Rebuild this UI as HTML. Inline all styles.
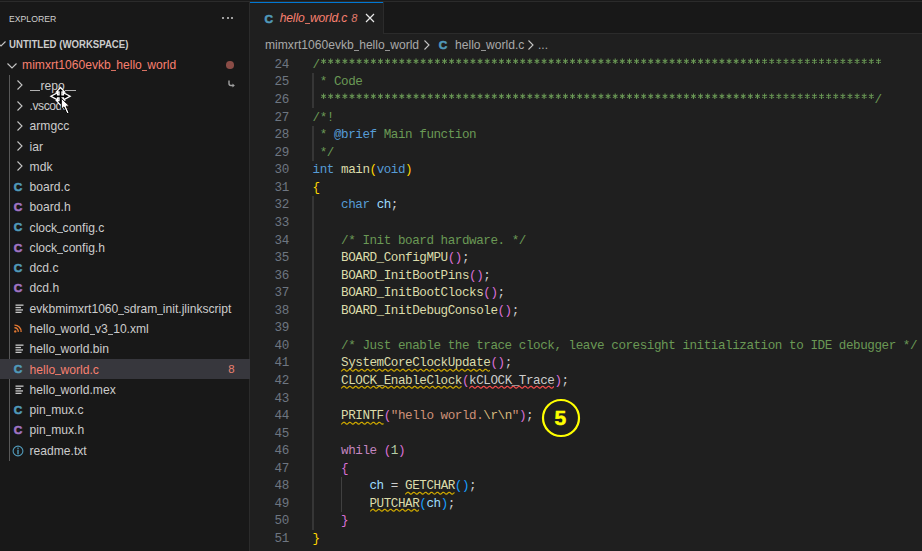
<!DOCTYPE html>
<html><head><meta charset="utf-8">
<style>
*{margin:0;padding:0;box-sizing:border-box}
html,body{width:922px;height:551px;overflow:hidden;background:#1f1f1f}
body{position:relative;font-family:"Liberation Sans",sans-serif;color:#cccccc}
.abs,.ic{position:absolute}
#side{position:absolute;left:0;top:0;width:249px;height:551px;background:#181818}
#sideborder{position:absolute;left:249px;top:2px;width:1px;height:549px;background:#2b2b2b}
#top0{position:absolute;left:0;top:0;width:922px;height:1px;background:#1a1a1a}
#topline{position:absolute;left:0;top:1px;width:922px;height:1px;background:#2b2b2b}
.title{position:absolute;left:9px;top:11.7px;font-size:9.7px;color:#d0d0d0;line-height:14px;transform:scaleX(0.895);transform-origin:0 0}
.hdr{position:absolute;left:9px;top:37.6px;font-size:10.4px;font-weight:bold;line-height:14px;color:#cccccc;transform:scaleX(0.925);transform-origin:0 0}
.row{position:absolute;left:0;width:250px;font-size:12.1px;white-space:pre}
.row .t{position:absolute;left:30px;top:0}
.sel{background:#37373d}
.u{display:inline-block;width:5.45px;height:1px;background:currentColor;vertical-align:-1.8px;opacity:0.85}
.err{color:#f88070}
#guide{position:absolute;left:9px;top:75px;width:1px;height:386px;background:#585858}
#tabbar{position:absolute;left:250px;top:2px;width:672px;height:31px;background:#181818}
#tabbot{position:absolute;left:250px;top:33px;width:672px;height:1px;background:#2b2b2b}
#tab{position:absolute;left:250px;top:2px;width:134px;height:32px;background:#1f1f1f;border-right:1px solid #2b2b2b}
#tabtop{position:absolute;left:250px;top:2px;width:133px;height:1px;background:#0078d4}
.mono{font-family:"Liberation Mono",monospace;white-space:pre}
.c{color:#6a9955}.k{color:#569cd6}.f{color:#dcdcaa}.v{color:#9cdcfe}.s{color:#ce9178}.e{color:#d7ba7d}.n{color:#b5cea8}.p{color:#c586c0}.d{color:#cccccc}
.b1{color:#ffd700}.b2{color:#da70d6}.b3{color:#179fff}
.ig{position:absolute;width:1px;background:#404040}
</style></head><body>
<div id="side"></div>
<div id="sideborder"></div>
<div id="topline"></div><div id="top0"></div>
<div class="title">EXPLORER</div>

<div class="abs" style="left:222.1px;top:16.8px;width:2px;height:2px;background:#cccccc;border-radius:1px"></div>
<div class="abs" style="left:226.7px;top:16.8px;width:2px;height:2px;background:#cccccc;border-radius:1px"></div>
<div class="abs" style="left:231.3px;top:16.8px;width:2px;height:2px;background:#cccccc;border-radius:1px"></div>
<div class="hdr">UNTITLED (WORKSPACE)</div>
<svg class="ic" style="left:-5.5px;top:40.3px" width="12" height="8" viewBox="0 0 12 8"><path d="M1.5 1.5 L6 6 L10.5 1.5" fill="none" stroke="#c5c5c5" stroke-width="1.1"/></svg>
<div id="guide"></div>
<div class="row " style="top:54.80px;height:20.28px;line-height:20.28px"><span class="t err" style="left:22.1px;top:0.6px;">mimxrt1060evkb<span class="u"></span>hello<span class="u"></span>world</span></div>
<svg class="ic" style="left:6px;top:61.739999999999995px" width="12" height="8" viewBox="0 0 12 8"><path d="M1.5 1.5 L6 6 L10.5 1.5" fill="none" stroke="#c5c5c5" stroke-width="1.1"/></svg>
<div class="row " style="top:75.08px;height:20.28px;line-height:20.28px"><span class="t " style="left:29.6px;top:0.6px;"><span class="u"></span><span class="u"></span>repo<span class="u"></span><span class="u"></span></span></div>
<svg class="ic" style="left:16px;top:79.22px" width="8" height="12" viewBox="0 0 8 12"><path d="M1.5 1.5 L6 6 L1.5 10.5" fill="none" stroke="#c5c5c5" stroke-width="1.1"/></svg>
<div class="row " style="top:95.36px;height:20.28px;line-height:20.28px"><span class="t " style="left:29.6px;top:0.6px;letter-spacing:-0.45px">.vscode</span></div>
<svg class="ic" style="left:16px;top:99.5px" width="8" height="12" viewBox="0 0 8 12"><path d="M1.5 1.5 L6 6 L1.5 10.5" fill="none" stroke="#c5c5c5" stroke-width="1.1"/></svg>
<div class="row " style="top:115.64px;height:20.28px;line-height:20.28px"><span class="t " style="left:29.6px;top:0.6px;">armgcc</span></div>
<svg class="ic" style="left:16px;top:119.78px" width="8" height="12" viewBox="0 0 8 12"><path d="M1.5 1.5 L6 6 L1.5 10.5" fill="none" stroke="#c5c5c5" stroke-width="1.1"/></svg>
<div class="row " style="top:135.92px;height:20.28px;line-height:20.28px"><span class="t " style="left:29.6px;top:0.6px;">iar</span></div>
<svg class="ic" style="left:16px;top:140.06px" width="8" height="12" viewBox="0 0 8 12"><path d="M1.5 1.5 L6 6 L1.5 10.5" fill="none" stroke="#c5c5c5" stroke-width="1.1"/></svg>
<div class="row " style="top:156.20px;height:20.28px;line-height:20.28px"><span class="t " style="left:29.6px;top:0.6px;">mdk</span></div>
<svg class="ic" style="left:16px;top:160.33999999999997px" width="8" height="12" viewBox="0 0 8 12"><path d="M1.5 1.5 L6 6 L1.5 10.5" fill="none" stroke="#c5c5c5" stroke-width="1.1"/></svg>
<div class="row " style="top:176.48px;height:20.28px;line-height:20.28px"><span class="t " style="left:29.6px;top:0.6px;">board.c</span></div>
<div class="ic" style="left:13.80px;top:179.82px;font:bold 11.8px/14px 'Liberation Sans',sans-serif;color:#519aba;-webkit-text-stroke:0.55px #519aba">C</div>
<div class="row " style="top:196.76px;height:20.28px;line-height:20.28px"><span class="t " style="left:29.6px;top:0.6px;">board.h</span></div>
<div class="ic" style="left:13.80px;top:200.10px;font:bold 11.8px/14px 'Liberation Sans',sans-serif;color:#a074c4;-webkit-text-stroke:0.55px #a074c4">C</div>
<div class="row " style="top:217.04px;height:20.28px;line-height:20.28px"><span class="t " style="left:29.6px;top:0.6px;">clock<span class="u"></span>config.c</span></div>
<div class="ic" style="left:13.80px;top:220.38px;font:bold 11.8px/14px 'Liberation Sans',sans-serif;color:#519aba;-webkit-text-stroke:0.55px #519aba">C</div>
<div class="row " style="top:237.32px;height:20.28px;line-height:20.28px"><span class="t " style="left:29.6px;top:0.6px;">clock<span class="u"></span>config.h</span></div>
<div class="ic" style="left:13.80px;top:240.66px;font:bold 11.8px/14px 'Liberation Sans',sans-serif;color:#a074c4;-webkit-text-stroke:0.55px #a074c4">C</div>
<div class="row " style="top:257.60px;height:20.28px;line-height:20.28px"><span class="t " style="left:29.6px;top:0.6px;">dcd.c</span></div>
<div class="ic" style="left:13.80px;top:260.94px;font:bold 11.8px/14px 'Liberation Sans',sans-serif;color:#519aba;-webkit-text-stroke:0.55px #519aba">C</div>
<div class="row " style="top:277.88px;height:20.28px;line-height:20.28px"><span class="t " style="left:29.6px;top:0.6px;">dcd.h</span></div>
<div class="ic" style="left:13.80px;top:281.22px;font:bold 11.8px/14px 'Liberation Sans',sans-serif;color:#a074c4;-webkit-text-stroke:0.55px #a074c4">C</div>
<div class="row " style="top:298.16px;height:20.28px;line-height:20.28px"><span class="t " style="left:29.6px;top:0.6px;">evkbmimxrt1060<span class="u"></span>sdram<span class="u"></span>init.jlinkscript</span></div>
<svg class="ic" style="left:15.1px;top:303.6px" width="10" height="10" viewBox="0 0 10 10"><rect x="0.5" y="0.5" width="8" height="1.3" fill="#c8c8c8"/><rect x="0.5" y="2.9" width="5.5" height="1.3" fill="#c8c8c8"/><rect x="0.5" y="5.3" width="7.5" height="1.3" fill="#c8c8c8"/><rect x="0.5" y="7.7" width="6" height="1.3" fill="#c8c8c8"/></svg>
<div class="row " style="top:318.44px;height:20.28px;line-height:20.28px"><span class="t " style="left:29.6px;top:0.6px;">hello<span class="u"></span>world<span class="u"></span>v3<span class="u"></span>10.xml</span></div>
<svg class="ic" style="left:14px;top:323.97999999999996px" width="9" height="9" viewBox="0 0 10 10"><circle cx="1.4" cy="8.2" r="1.3" fill="#e37933"/><path d="M0.5 4.2 A4 4 0 0 1 4.7 8.8" fill="none" stroke="#e37933" stroke-width="1.5"/><path d="M0.5 1.2 A7.2 7.2 0 0 1 7.9 8.8" fill="none" stroke="#e37933" stroke-width="1.5"/></svg>
<div class="row " style="top:338.72px;height:20.28px;line-height:20.28px"><span class="t " style="left:29.6px;top:0.6px;">hello<span class="u"></span>world.bin</span></div>
<svg class="ic" style="left:15.1px;top:344.16px" width="10" height="10" viewBox="0 0 10 10"><rect x="0.5" y="0.5" width="8" height="1.3" fill="#c8c8c8"/><rect x="0.5" y="2.9" width="5.5" height="1.3" fill="#c8c8c8"/><rect x="0.5" y="5.3" width="7.5" height="1.3" fill="#c8c8c8"/><rect x="0.5" y="7.7" width="6" height="1.3" fill="#c8c8c8"/></svg>
<div class="row sel" style="top:359.00px;height:20.28px;line-height:20.28px"><span class="t err" style="left:29.6px;top:0.6px;">hello<span class="u"></span>world.c</span></div>
<div class="ic" style="left:13.80px;top:362.34px;font:bold 11.8px/14px 'Liberation Sans',sans-serif;color:#519aba;-webkit-text-stroke:0.55px #519aba">C</div>
<div class="row " style="top:379.28px;height:20.28px;line-height:20.28px"><span class="t " style="left:29.6px;top:0.6px;">hello<span class="u"></span>world.mex</span></div>
<svg class="ic" style="left:15.1px;top:384.72px" width="10" height="10" viewBox="0 0 10 10"><rect x="0.5" y="0.5" width="8" height="1.3" fill="#c8c8c8"/><rect x="0.5" y="2.9" width="5.5" height="1.3" fill="#c8c8c8"/><rect x="0.5" y="5.3" width="7.5" height="1.3" fill="#c8c8c8"/><rect x="0.5" y="7.7" width="6" height="1.3" fill="#c8c8c8"/></svg>
<div class="row " style="top:399.56px;height:20.28px;line-height:20.28px"><span class="t " style="left:29.6px;top:0.6px;">pin<span class="u"></span>mux.c</span></div>
<div class="ic" style="left:13.80px;top:402.90px;font:bold 11.8px/14px 'Liberation Sans',sans-serif;color:#519aba;-webkit-text-stroke:0.55px #519aba">C</div>
<div class="row " style="top:419.84px;height:20.28px;line-height:20.28px"><span class="t " style="left:29.6px;top:0.6px;">pin<span class="u"></span>mux.h</span></div>
<div class="ic" style="left:13.80px;top:423.18px;font:bold 11.8px/14px 'Liberation Sans',sans-serif;color:#a074c4;-webkit-text-stroke:0.55px #a074c4">C</div>
<div class="row " style="top:440.12px;height:20.28px;line-height:20.28px"><span class="t " style="left:29.6px;top:0.6px;">readme.txt</span></div>
<svg class="ic" style="left:11.6px;top:444.66px" width="12" height="12" viewBox="0 0 12 12"><circle cx="6" cy="6" r="4.9" fill="none" stroke="#519aba" stroke-width="1.1"/><rect x="5.3" y="2.6" width="1.4" height="1.3" fill="#519aba"/><rect x="5.3" y="4.7" width="1.4" height="4.6" fill="#519aba"/></svg>
<div class="abs" style="left:226.1px;top:61.14px;width:7.6px;height:7.6px;border-radius:50%;background:#8a4c46"></div>
<div class="abs err" style="left:228.3px;top:359.40px;line-height:20.28px;font-size:11.4px;color:#e8806f">8</div>
<svg class="ic" style="left:227px;top:79px" width="9" height="9" viewBox="0 0 9 9"><path d="M2 1.5 V4.5 Q2 6.5 4 6.5 H6" fill="none" stroke="#a0a0a0" stroke-width="1.4"/><path d="M5.5 4.5 L7.8 6.5 L5.5 8.5 Z" fill="#a0a0a0"/></svg>
<div id="tabbar"></div><div id="tabbot"></div><div id="tab"></div><div id="tabtop"></div>
<div class="ic" style="left:264.40px;top:11.90px;font:bold 11.8px/14px 'Liberation Sans',sans-serif;color:#519aba;-webkit-text-stroke:0.55px #519aba">C</div>
<div class="abs err" style="left:279.7px;top:11px;font-size:12.1px;letter-spacing:-0.15px;line-height:14px;font-style:italic;white-space:pre">hello<span class="u"></span>world.c</div>
<div class="abs err" style="left:351.2px;top:11px;font-size:11px;line-height:14px;font-style:italic;color:#e07b6d">8</div>
<svg class="ic" style="left:365px;top:13px" width="10" height="10" viewBox="0 0 10 10"><path d="M1 1 L9 9 M9 1 L1 9" stroke="#e8e8e8" stroke-width="1.2"/></svg>
<div class="abs" style="left:265px;top:38px;font-size:12.1px;line-height:14px;white-space:pre;color:#a9a9a9">mimxrt1060evkb<span class="u"></span>hello<span class="u"></span>world</div>
<svg class="ic" style="left:423px;top:39px" width="8" height="12" viewBox="0 0 8 12"><path d="M1.5 1.5 L6 6 L1.5 10.5" fill="none" stroke="#c5c5c5" stroke-width="1.1"/></svg>
<div class="ic" style="left:438.70px;top:38.20px;font:bold 11.8px/14px 'Liberation Sans',sans-serif;color:#519aba;-webkit-text-stroke:0.55px #519aba">C</div>
<div class="abs" style="left:455px;top:38px;font-size:12.1px;line-height:14px;white-space:pre;color:#a9a9a9">hello<span class="u"></span>world.c</div>
<svg class="ic" style="left:527px;top:39px" width="8" height="12" viewBox="0 0 8 12"><path d="M1.5 1.5 L6 6 L1.5 10.5" fill="none" stroke="#c5c5c5" stroke-width="1.1"/></svg>
<div class="abs" style="left:538px;top:38px;font-size:12px;line-height:14px;white-space:pre;color:#a9a9a9">...</div>
<div class="ig" style="width:2px;background:#363636;left:312.10px;top:72.96px;height:35.12px"></div>
<div class="ig" style="width:2px;background:#363636;left:312.10px;top:125.64px;height:35.12px"></div>
<div class="ig" style="width:2px;background:#363636;left:312.10px;top:195.88px;height:333.64px"></div>
<div class="ig" style="left:340.56px;top:476.84px;height:35.12px"></div>
<div class="abs mono" style="left:248.8px;width:40px;text-align:right;top:56.90px;font-size:12.6px;letter-spacing:-0.446px;line-height:17.56px;color:#6e7681">24</div>
<div class="abs mono" style="left:312.6px;top:56.90px;font-size:12.6px;letter-spacing:-0.446px;line-height:17.56px;color:#cccccc"><span class="c">/                                                                               </span></div>
<div class="abs mono" style="left:248.8px;width:40px;text-align:right;top:74.46px;font-size:12.6px;letter-spacing:-0.446px;line-height:17.56px;color:#6e7681">25</div>
<div class="abs mono" style="left:312.6px;top:74.46px;font-size:12.6px;letter-spacing:-0.446px;line-height:17.56px;color:#cccccc"><span class="c"> * Code</span></div>
<div class="abs mono" style="left:248.8px;width:40px;text-align:right;top:92.02px;font-size:12.6px;letter-spacing:-0.446px;line-height:17.56px;color:#6e7681">26</div>
<div class="abs mono" style="left:312.6px;top:92.02px;font-size:12.6px;letter-spacing:-0.446px;line-height:17.56px;color:#cccccc"><span class="c">                                                                               /</span></div>
<div class="abs mono" style="left:248.8px;width:40px;text-align:right;top:109.58px;font-size:12.6px;letter-spacing:-0.446px;line-height:17.56px;color:#6e7681">27</div>
<div class="abs mono" style="left:312.6px;top:109.58px;font-size:12.6px;letter-spacing:-0.446px;line-height:17.56px;color:#cccccc"><span class="c">/*!</span></div>
<div class="abs mono" style="left:248.8px;width:40px;text-align:right;top:127.14px;font-size:12.6px;letter-spacing:-0.446px;line-height:17.56px;color:#6e7681">28</div>
<div class="abs mono" style="left:312.6px;top:127.14px;font-size:12.6px;letter-spacing:-0.446px;line-height:17.56px;color:#cccccc"><span class="c"> * </span><span class="k">@brief</span><span class="c"> Main function</span></div>
<div class="abs mono" style="left:248.8px;width:40px;text-align:right;top:144.70px;font-size:12.6px;letter-spacing:-0.446px;line-height:17.56px;color:#6e7681">29</div>
<div class="abs mono" style="left:312.6px;top:144.70px;font-size:12.6px;letter-spacing:-0.446px;line-height:17.56px;color:#cccccc"><span class="c"> */</span></div>
<div class="abs mono" style="left:248.8px;width:40px;text-align:right;top:162.26px;font-size:12.6px;letter-spacing:-0.446px;line-height:17.56px;color:#6e7681">30</div>
<div class="abs mono" style="left:312.6px;top:162.26px;font-size:12.6px;letter-spacing:-0.446px;line-height:17.56px;color:#cccccc"><span class="k">int</span><span class="d"> </span><span class="f">main</span><span class="b1">(</span><span class="k">void</span><span class="b1">)</span></div>
<div class="abs mono" style="left:248.8px;width:40px;text-align:right;top:179.82px;font-size:12.6px;letter-spacing:-0.446px;line-height:17.56px;color:#6e7681">31</div>
<div class="abs mono" style="left:312.6px;top:179.82px;font-size:12.6px;letter-spacing:-0.446px;line-height:17.56px;color:#cccccc"><span class="b1">{</span></div>
<div class="abs mono" style="left:248.8px;width:40px;text-align:right;top:197.38px;font-size:12.6px;letter-spacing:-0.446px;line-height:17.56px;color:#6e7681">32</div>
<div class="abs mono" style="left:312.6px;top:197.38px;font-size:12.6px;letter-spacing:-0.446px;line-height:17.56px;color:#cccccc"><span class="d">    </span><span class="k">char</span><span class="d"> </span><span class="v">ch</span><span class="d">;</span></div>
<div class="abs mono" style="left:248.8px;width:40px;text-align:right;top:214.94px;font-size:12.6px;letter-spacing:-0.446px;line-height:17.56px;color:#6e7681">33</div>
<div class="abs mono" style="left:312.6px;top:214.94px;font-size:12.6px;letter-spacing:-0.446px;line-height:17.56px;color:#cccccc"></div>
<div class="abs mono" style="left:248.8px;width:40px;text-align:right;top:232.50px;font-size:12.6px;letter-spacing:-0.446px;line-height:17.56px;color:#6e7681">34</div>
<div class="abs mono" style="left:312.6px;top:232.50px;font-size:12.6px;letter-spacing:-0.446px;line-height:17.56px;color:#cccccc"><span class="d">    </span><span class="c">/* Init board hardware. */</span></div>
<div class="abs mono" style="left:248.8px;width:40px;text-align:right;top:250.06px;font-size:12.6px;letter-spacing:-0.446px;line-height:17.56px;color:#6e7681">35</div>
<div class="abs mono" style="left:312.6px;top:250.06px;font-size:12.6px;letter-spacing:-0.446px;line-height:17.56px;color:#cccccc"><span class="d">    </span><span class="f">BOARD_ConfigMPU</span><span class="b2">()</span><span class="d">;</span></div>
<div class="abs mono" style="left:248.8px;width:40px;text-align:right;top:267.62px;font-size:12.6px;letter-spacing:-0.446px;line-height:17.56px;color:#6e7681">36</div>
<div class="abs mono" style="left:312.6px;top:267.62px;font-size:12.6px;letter-spacing:-0.446px;line-height:17.56px;color:#cccccc"><span class="d">    </span><span class="f">BOARD_InitBootPins</span><span class="b2">()</span><span class="d">;</span></div>
<div class="abs mono" style="left:248.8px;width:40px;text-align:right;top:285.18px;font-size:12.6px;letter-spacing:-0.446px;line-height:17.56px;color:#6e7681">37</div>
<div class="abs mono" style="left:312.6px;top:285.18px;font-size:12.6px;letter-spacing:-0.446px;line-height:17.56px;color:#cccccc"><span class="d">    </span><span class="f">BOARD_InitBootClocks</span><span class="b2">()</span><span class="d">;</span></div>
<div class="abs mono" style="left:248.8px;width:40px;text-align:right;top:302.74px;font-size:12.6px;letter-spacing:-0.446px;line-height:17.56px;color:#6e7681">38</div>
<div class="abs mono" style="left:312.6px;top:302.74px;font-size:12.6px;letter-spacing:-0.446px;line-height:17.56px;color:#cccccc"><span class="d">    </span><span class="f">BOARD_InitDebugConsole</span><span class="b2">()</span><span class="d">;</span></div>
<div class="abs mono" style="left:248.8px;width:40px;text-align:right;top:320.30px;font-size:12.6px;letter-spacing:-0.446px;line-height:17.56px;color:#6e7681">39</div>
<div class="abs mono" style="left:312.6px;top:320.30px;font-size:12.6px;letter-spacing:-0.446px;line-height:17.56px;color:#cccccc"></div>
<div class="abs mono" style="left:248.8px;width:40px;text-align:right;top:337.86px;font-size:12.6px;letter-spacing:-0.446px;line-height:17.56px;color:#6e7681">40</div>
<div class="abs mono" style="left:312.6px;top:337.86px;font-size:12.6px;letter-spacing:-0.446px;line-height:17.56px;color:#cccccc"><span class="d">    </span><span class="c">/* Just enable the trace clock, leave coresight initialization to IDE debugger */</span></div>
<div class="abs mono" style="left:248.8px;width:40px;text-align:right;top:355.42px;font-size:12.6px;letter-spacing:-0.446px;line-height:17.56px;color:#6e7681">41</div>
<div class="abs mono" style="left:312.6px;top:355.42px;font-size:12.6px;letter-spacing:-0.446px;line-height:17.56px;color:#cccccc"><span class="d">    </span><span class="f">SystemCoreClockUpdate</span><span class="b2">()</span><span class="d">;</span></div>
<div class="abs mono" style="left:248.8px;width:40px;text-align:right;top:372.98px;font-size:12.6px;letter-spacing:-0.446px;line-height:17.56px;color:#6e7681">42</div>
<div class="abs mono" style="left:312.6px;top:372.98px;font-size:12.6px;letter-spacing:-0.446px;line-height:17.56px;color:#cccccc"><span class="d">    </span><span class="f">CLOCK_EnableClock</span><span class="b2">(</span><span class="d">kCLOCK_Trace</span><span class="b2">)</span><span class="d">;</span></div>
<div class="abs mono" style="left:248.8px;width:40px;text-align:right;top:390.54px;font-size:12.6px;letter-spacing:-0.446px;line-height:17.56px;color:#6e7681">43</div>
<div class="abs mono" style="left:312.6px;top:390.54px;font-size:12.6px;letter-spacing:-0.446px;line-height:17.56px;color:#cccccc"></div>
<div class="abs mono" style="left:248.8px;width:40px;text-align:right;top:408.10px;font-size:12.6px;letter-spacing:-0.446px;line-height:17.56px;color:#6e7681">44</div>
<div class="abs mono" style="left:312.6px;top:408.10px;font-size:12.6px;letter-spacing:-0.446px;line-height:17.56px;color:#cccccc"><span class="d">    </span><span class="f">PRINTF</span><span class="b2">(</span><span class="s">"hello world.</span><span class="e">\r\n</span><span class="s">"</span><span class="b2">)</span><span class="d">;</span></div>
<div class="abs mono" style="left:248.8px;width:40px;text-align:right;top:425.66px;font-size:12.6px;letter-spacing:-0.446px;line-height:17.56px;color:#6e7681">45</div>
<div class="abs mono" style="left:312.6px;top:425.66px;font-size:12.6px;letter-spacing:-0.446px;line-height:17.56px;color:#cccccc"></div>
<div class="abs mono" style="left:248.8px;width:40px;text-align:right;top:443.22px;font-size:12.6px;letter-spacing:-0.446px;line-height:17.56px;color:#6e7681">46</div>
<div class="abs mono" style="left:312.6px;top:443.22px;font-size:12.6px;letter-spacing:-0.446px;line-height:17.56px;color:#cccccc"><span class="d">    </span><span class="p">while</span><span class="d"> </span><span class="b2">(</span><span class="n">1</span><span class="b2">)</span></div>
<div class="abs mono" style="left:248.8px;width:40px;text-align:right;top:460.78px;font-size:12.6px;letter-spacing:-0.446px;line-height:17.56px;color:#6e7681">47</div>
<div class="abs mono" style="left:312.6px;top:460.78px;font-size:12.6px;letter-spacing:-0.446px;line-height:17.56px;color:#cccccc"><span class="d">    </span><span class="b2">{</span></div>
<div class="abs mono" style="left:248.8px;width:40px;text-align:right;top:478.34px;font-size:12.6px;letter-spacing:-0.446px;line-height:17.56px;color:#6e7681">48</div>
<div class="abs mono" style="left:312.6px;top:478.34px;font-size:12.6px;letter-spacing:-0.446px;line-height:17.56px;color:#cccccc"><span class="d">        </span><span class="v">ch</span><span class="d"> = </span><span class="f">GETCHAR</span><span class="b3">()</span><span class="d">;</span></div>
<div class="abs mono" style="left:248.8px;width:40px;text-align:right;top:495.90px;font-size:12.6px;letter-spacing:-0.446px;line-height:17.56px;color:#6e7681">49</div>
<div class="abs mono" style="left:312.6px;top:495.90px;font-size:12.6px;letter-spacing:-0.446px;line-height:17.56px;color:#cccccc"><span class="d">        </span><span class="f">PUTCHAR</span><span class="b3">(</span><span class="v">ch</span><span class="b3">)</span><span class="d">;</span></div>
<div class="abs mono" style="left:248.8px;width:40px;text-align:right;top:513.46px;font-size:12.6px;letter-spacing:-0.446px;line-height:17.56px;color:#6e7681">50</div>
<div class="abs mono" style="left:312.6px;top:513.46px;font-size:12.6px;letter-spacing:-0.446px;line-height:17.56px;color:#cccccc"><span class="d">    </span><span class="b2">}</span></div>
<div class="abs mono" style="left:248.8px;width:40px;text-align:right;top:531.02px;font-size:12.6px;letter-spacing:-0.446px;line-height:17.56px;color:#6e7681">51</div>
<div class="abs mono" style="left:312.6px;top:531.02px;font-size:12.6px;letter-spacing:-0.446px;line-height:17.56px;color:#cccccc"><span class="b1">}</span></div>
<svg class="ic" style="left:319.71px;top:56.90px" width="562.01" height="9" viewBox="0 0 562.01 9"><path d="M3.56 1.45L3.56 6.95M1.18 2.83L5.94 5.58M1.18 5.58L5.94 2.83M10.67 1.45L10.67 6.95M8.29 2.83L13.05 5.58M8.29 5.58L13.05 2.83M17.79 1.45L17.79 6.95M15.40 2.83L20.17 5.58M15.40 5.58L20.17 2.83M24.90 1.45L24.90 6.95M22.52 2.83L27.28 5.58M22.52 5.58L27.28 2.83M32.01 1.45L32.01 6.95M29.63 2.83L34.39 5.58M29.63 5.58L34.39 2.83M39.13 1.45L39.13 6.95M36.75 2.83L41.51 5.58M36.75 5.58L41.51 2.83M46.24 1.45L46.24 6.95M43.86 2.83L48.62 5.58M43.86 5.58L48.62 2.83M53.36 1.45L53.36 6.95M50.97 2.83L55.74 5.58M50.97 5.58L55.74 2.83M60.47 1.45L60.47 6.95M58.09 2.83L62.85 5.58M58.09 5.58L62.85 2.83M67.58 1.45L67.58 6.95M65.20 2.83L69.96 5.58M65.20 5.58L69.96 2.83M74.70 1.45L74.70 6.95M72.32 2.83L77.08 5.58M72.32 5.58L77.08 2.83M81.81 1.45L81.81 6.95M79.43 2.83L84.19 5.58M79.43 5.58L84.19 2.83M88.92 1.45L88.92 6.95M86.54 2.83L91.31 5.58M86.54 5.58L91.31 2.83M96.04 1.45L96.04 6.95M93.66 2.83L98.42 5.58M93.66 5.58L98.42 2.83M103.15 1.45L103.15 6.95M100.77 2.83L105.53 5.58M100.77 5.58L105.53 2.83M110.27 1.45L110.27 6.95M107.89 2.83L112.65 5.58M107.89 5.58L112.65 2.83M117.38 1.45L117.38 6.95M115.00 2.83L119.76 5.58M115.00 5.58L119.76 2.83M124.50 1.45L124.50 6.95M122.11 2.83L126.88 5.58M122.11 5.58L126.88 2.83M131.61 1.45L131.61 6.95M129.23 2.83L133.99 5.58M129.23 5.58L133.99 2.83M138.72 1.45L138.72 6.95M136.34 2.83L141.10 5.58M136.34 5.58L141.10 2.83M145.84 1.45L145.84 6.95M143.46 2.83L148.22 5.58M143.46 5.58L148.22 2.83M152.95 1.45L152.95 6.95M150.57 2.83L155.33 5.58M150.57 5.58L155.33 2.83M160.06 1.45L160.06 6.95M157.68 2.83L162.45 5.58M157.68 5.58L162.45 2.83M167.18 1.45L167.18 6.95M164.80 2.83L169.56 5.58M164.80 5.58L169.56 2.83M174.29 1.45L174.29 6.95M171.91 2.83L176.67 5.58M171.91 5.58L176.67 2.83M181.41 1.45L181.41 6.95M179.03 2.83L183.79 5.58M179.03 5.58L183.79 2.83M188.52 1.45L188.52 6.95M186.14 2.83L190.90 5.58M186.14 5.58L190.90 2.83M195.63 1.45L195.63 6.95M193.25 2.83L198.02 5.58M193.25 5.58L198.02 2.83M202.75 1.45L202.75 6.95M200.37 2.83L205.13 5.58M200.37 5.58L205.13 2.83M209.86 1.45L209.86 6.95M207.48 2.83L212.24 5.58M207.48 5.58L212.24 2.83M216.98 1.45L216.98 6.95M214.60 2.83L219.36 5.58M214.60 5.58L219.36 2.83M224.09 1.45L224.09 6.95M221.71 2.83L226.47 5.58M221.71 5.58L226.47 2.83M231.20 1.45L231.20 6.95M228.82 2.83L233.59 5.58M228.82 5.58L233.59 2.83M238.32 1.45L238.32 6.95M235.94 2.83L240.70 5.58M235.94 5.58L240.70 2.83M245.43 1.45L245.43 6.95M243.05 2.83L247.81 5.58M243.05 5.58L247.81 2.83M252.55 1.45L252.55 6.95M250.17 2.83L254.93 5.58M250.17 5.58L254.93 2.83M259.66 1.45L259.66 6.95M257.28 2.83L262.04 5.58M257.28 5.58L262.04 2.83M266.78 1.45L266.78 6.95M264.39 2.83L269.16 5.58M264.39 5.58L269.16 2.83M273.89 1.45L273.89 6.95M271.51 2.83L276.27 5.58M271.51 5.58L276.27 2.83M281.00 1.45L281.00 6.95M278.62 2.83L283.38 5.58M278.62 5.58L283.38 2.83M288.12 1.45L288.12 6.95M285.74 2.83L290.50 5.58M285.74 5.58L290.50 2.83M295.23 1.45L295.23 6.95M292.85 2.83L297.61 5.58M292.85 5.58L297.61 2.83M302.35 1.45L302.35 6.95M299.96 2.83L304.73 5.58M299.96 5.58L304.73 2.83M309.46 1.45L309.46 6.95M307.08 2.83L311.84 5.58M307.08 5.58L311.84 2.83M316.57 1.45L316.57 6.95M314.19 2.83L318.95 5.58M314.19 5.58L318.95 2.83M323.69 1.45L323.69 6.95M321.31 2.83L326.07 5.58M321.31 5.58L326.07 2.83M330.80 1.45L330.80 6.95M328.42 2.83L333.18 5.58M328.42 5.58L333.18 2.83M337.92 1.45L337.92 6.95M335.53 2.83L340.30 5.58M335.53 5.58L340.30 2.83M345.03 1.45L345.03 6.95M342.65 2.83L347.41 5.58M342.65 5.58L347.41 2.83M352.14 1.45L352.14 6.95M349.76 2.83L354.52 5.58M349.76 5.58L354.52 2.83M359.26 1.45L359.26 6.95M356.88 2.83L361.64 5.58M356.88 5.58L361.64 2.83M366.37 1.45L366.37 6.95M363.99 2.83L368.75 5.58M363.99 5.58L368.75 2.83M373.49 1.45L373.49 6.95M371.10 2.83L375.87 5.58M371.10 5.58L375.87 2.83M380.60 1.45L380.60 6.95M378.22 2.83L382.98 5.58M378.22 5.58L382.98 2.83M387.71 1.45L387.71 6.95M385.33 2.83L390.09 5.58M385.33 5.58L390.09 2.83M394.83 1.45L394.83 6.95M392.45 2.83L397.21 5.58M392.45 5.58L397.21 2.83M401.94 1.45L401.94 6.95M399.56 2.83L404.32 5.58M399.56 5.58L404.32 2.83M409.06 1.45L409.06 6.95M406.67 2.83L411.44 5.58M406.67 5.58L411.44 2.83M416.17 1.45L416.17 6.95M413.79 2.83L418.55 5.58M413.79 5.58L418.55 2.83M423.28 1.45L423.28 6.95M420.90 2.83L425.66 5.58M420.90 5.58L425.66 2.83M430.40 1.45L430.40 6.95M428.02 2.83L432.78 5.58M428.02 5.58L432.78 2.83M437.51 1.45L437.51 6.95M435.13 2.83L439.89 5.58M435.13 5.58L439.89 2.83M444.62 1.45L444.62 6.95M442.24 2.83L447.01 5.58M442.24 5.58L447.01 2.83M451.74 1.45L451.74 6.95M449.36 2.83L454.12 5.58M449.36 5.58L454.12 2.83M458.85 1.45L458.85 6.95M456.47 2.83L461.23 5.58M456.47 5.58L461.23 2.83M465.97 1.45L465.97 6.95M463.59 2.83L468.35 5.58M463.59 5.58L468.35 2.83M473.08 1.45L473.08 6.95M470.70 2.83L475.46 5.58M470.70 5.58L475.46 2.83M480.19 1.45L480.19 6.95M477.81 2.83L482.58 5.58M477.81 5.58L482.58 2.83M487.31 1.45L487.31 6.95M484.93 2.83L489.69 5.58M484.93 5.58L489.69 2.83M494.42 1.45L494.42 6.95M492.04 2.83L496.80 5.58M492.04 5.58L496.80 2.83M501.54 1.45L501.54 6.95M499.16 2.83L503.92 5.58M499.16 5.58L503.92 2.83M508.65 1.45L508.65 6.95M506.27 2.83L511.03 5.58M506.27 5.58L511.03 2.83M515.76 1.45L515.76 6.95M513.38 2.83L518.15 5.58M513.38 5.58L518.15 2.83M522.88 1.45L522.88 6.95M520.50 2.83L525.26 5.58M520.50 5.58L525.26 2.83M529.99 1.45L529.99 6.95M527.61 2.83L532.37 5.58M527.61 5.58L532.37 2.83M537.11 1.45L537.11 6.95M534.73 2.83L539.49 5.58M534.73 5.58L539.49 2.83M544.22 1.45L544.22 6.95M541.84 2.83L546.60 5.58M541.84 5.58L546.60 2.83M551.34 1.45L551.34 6.95M548.95 2.83L553.72 5.58M548.95 5.58L553.72 2.83M558.45 1.45L558.45 6.95M556.07 2.83L560.83 5.58M556.07 5.58L560.83 2.83" stroke="#6a9955" stroke-width="1.05" fill="none"/></svg>
<svg class="ic" style="left:319.71px;top:92.02px" width="554.89" height="9" viewBox="0 0 554.89 9"><path d="M3.56 1.45L3.56 6.95M1.18 2.83L5.94 5.58M1.18 5.58L5.94 2.83M10.67 1.45L10.67 6.95M8.29 2.83L13.05 5.58M8.29 5.58L13.05 2.83M17.79 1.45L17.79 6.95M15.40 2.83L20.17 5.58M15.40 5.58L20.17 2.83M24.90 1.45L24.90 6.95M22.52 2.83L27.28 5.58M22.52 5.58L27.28 2.83M32.01 1.45L32.01 6.95M29.63 2.83L34.39 5.58M29.63 5.58L34.39 2.83M39.13 1.45L39.13 6.95M36.75 2.83L41.51 5.58M36.75 5.58L41.51 2.83M46.24 1.45L46.24 6.95M43.86 2.83L48.62 5.58M43.86 5.58L48.62 2.83M53.36 1.45L53.36 6.95M50.97 2.83L55.74 5.58M50.97 5.58L55.74 2.83M60.47 1.45L60.47 6.95M58.09 2.83L62.85 5.58M58.09 5.58L62.85 2.83M67.58 1.45L67.58 6.95M65.20 2.83L69.96 5.58M65.20 5.58L69.96 2.83M74.70 1.45L74.70 6.95M72.32 2.83L77.08 5.58M72.32 5.58L77.08 2.83M81.81 1.45L81.81 6.95M79.43 2.83L84.19 5.58M79.43 5.58L84.19 2.83M88.92 1.45L88.92 6.95M86.54 2.83L91.31 5.58M86.54 5.58L91.31 2.83M96.04 1.45L96.04 6.95M93.66 2.83L98.42 5.58M93.66 5.58L98.42 2.83M103.15 1.45L103.15 6.95M100.77 2.83L105.53 5.58M100.77 5.58L105.53 2.83M110.27 1.45L110.27 6.95M107.89 2.83L112.65 5.58M107.89 5.58L112.65 2.83M117.38 1.45L117.38 6.95M115.00 2.83L119.76 5.58M115.00 5.58L119.76 2.83M124.50 1.45L124.50 6.95M122.11 2.83L126.88 5.58M122.11 5.58L126.88 2.83M131.61 1.45L131.61 6.95M129.23 2.83L133.99 5.58M129.23 5.58L133.99 2.83M138.72 1.45L138.72 6.95M136.34 2.83L141.10 5.58M136.34 5.58L141.10 2.83M145.84 1.45L145.84 6.95M143.46 2.83L148.22 5.58M143.46 5.58L148.22 2.83M152.95 1.45L152.95 6.95M150.57 2.83L155.33 5.58M150.57 5.58L155.33 2.83M160.06 1.45L160.06 6.95M157.68 2.83L162.45 5.58M157.68 5.58L162.45 2.83M167.18 1.45L167.18 6.95M164.80 2.83L169.56 5.58M164.80 5.58L169.56 2.83M174.29 1.45L174.29 6.95M171.91 2.83L176.67 5.58M171.91 5.58L176.67 2.83M181.41 1.45L181.41 6.95M179.03 2.83L183.79 5.58M179.03 5.58L183.79 2.83M188.52 1.45L188.52 6.95M186.14 2.83L190.90 5.58M186.14 5.58L190.90 2.83M195.63 1.45L195.63 6.95M193.25 2.83L198.02 5.58M193.25 5.58L198.02 2.83M202.75 1.45L202.75 6.95M200.37 2.83L205.13 5.58M200.37 5.58L205.13 2.83M209.86 1.45L209.86 6.95M207.48 2.83L212.24 5.58M207.48 5.58L212.24 2.83M216.98 1.45L216.98 6.95M214.60 2.83L219.36 5.58M214.60 5.58L219.36 2.83M224.09 1.45L224.09 6.95M221.71 2.83L226.47 5.58M221.71 5.58L226.47 2.83M231.20 1.45L231.20 6.95M228.82 2.83L233.59 5.58M228.82 5.58L233.59 2.83M238.32 1.45L238.32 6.95M235.94 2.83L240.70 5.58M235.94 5.58L240.70 2.83M245.43 1.45L245.43 6.95M243.05 2.83L247.81 5.58M243.05 5.58L247.81 2.83M252.55 1.45L252.55 6.95M250.17 2.83L254.93 5.58M250.17 5.58L254.93 2.83M259.66 1.45L259.66 6.95M257.28 2.83L262.04 5.58M257.28 5.58L262.04 2.83M266.78 1.45L266.78 6.95M264.39 2.83L269.16 5.58M264.39 5.58L269.16 2.83M273.89 1.45L273.89 6.95M271.51 2.83L276.27 5.58M271.51 5.58L276.27 2.83M281.00 1.45L281.00 6.95M278.62 2.83L283.38 5.58M278.62 5.58L283.38 2.83M288.12 1.45L288.12 6.95M285.74 2.83L290.50 5.58M285.74 5.58L290.50 2.83M295.23 1.45L295.23 6.95M292.85 2.83L297.61 5.58M292.85 5.58L297.61 2.83M302.35 1.45L302.35 6.95M299.96 2.83L304.73 5.58M299.96 5.58L304.73 2.83M309.46 1.45L309.46 6.95M307.08 2.83L311.84 5.58M307.08 5.58L311.84 2.83M316.57 1.45L316.57 6.95M314.19 2.83L318.95 5.58M314.19 5.58L318.95 2.83M323.69 1.45L323.69 6.95M321.31 2.83L326.07 5.58M321.31 5.58L326.07 2.83M330.80 1.45L330.80 6.95M328.42 2.83L333.18 5.58M328.42 5.58L333.18 2.83M337.92 1.45L337.92 6.95M335.53 2.83L340.30 5.58M335.53 5.58L340.30 2.83M345.03 1.45L345.03 6.95M342.65 2.83L347.41 5.58M342.65 5.58L347.41 2.83M352.14 1.45L352.14 6.95M349.76 2.83L354.52 5.58M349.76 5.58L354.52 2.83M359.26 1.45L359.26 6.95M356.88 2.83L361.64 5.58M356.88 5.58L361.64 2.83M366.37 1.45L366.37 6.95M363.99 2.83L368.75 5.58M363.99 5.58L368.75 2.83M373.49 1.45L373.49 6.95M371.10 2.83L375.87 5.58M371.10 5.58L375.87 2.83M380.60 1.45L380.60 6.95M378.22 2.83L382.98 5.58M378.22 5.58L382.98 2.83M387.71 1.45L387.71 6.95M385.33 2.83L390.09 5.58M385.33 5.58L390.09 2.83M394.83 1.45L394.83 6.95M392.45 2.83L397.21 5.58M392.45 5.58L397.21 2.83M401.94 1.45L401.94 6.95M399.56 2.83L404.32 5.58M399.56 5.58L404.32 2.83M409.06 1.45L409.06 6.95M406.67 2.83L411.44 5.58M406.67 5.58L411.44 2.83M416.17 1.45L416.17 6.95M413.79 2.83L418.55 5.58M413.79 5.58L418.55 2.83M423.28 1.45L423.28 6.95M420.90 2.83L425.66 5.58M420.90 5.58L425.66 2.83M430.40 1.45L430.40 6.95M428.02 2.83L432.78 5.58M428.02 5.58L432.78 2.83M437.51 1.45L437.51 6.95M435.13 2.83L439.89 5.58M435.13 5.58L439.89 2.83M444.62 1.45L444.62 6.95M442.24 2.83L447.01 5.58M442.24 5.58L447.01 2.83M451.74 1.45L451.74 6.95M449.36 2.83L454.12 5.58M449.36 5.58L454.12 2.83M458.85 1.45L458.85 6.95M456.47 2.83L461.23 5.58M456.47 5.58L461.23 2.83M465.97 1.45L465.97 6.95M463.59 2.83L468.35 5.58M463.59 5.58L468.35 2.83M473.08 1.45L473.08 6.95M470.70 2.83L475.46 5.58M470.70 5.58L475.46 2.83M480.19 1.45L480.19 6.95M477.81 2.83L482.58 5.58M477.81 5.58L482.58 2.83M487.31 1.45L487.31 6.95M484.93 2.83L489.69 5.58M484.93 5.58L489.69 2.83M494.42 1.45L494.42 6.95M492.04 2.83L496.80 5.58M492.04 5.58L496.80 2.83M501.54 1.45L501.54 6.95M499.16 2.83L503.92 5.58M499.16 5.58L503.92 2.83M508.65 1.45L508.65 6.95M506.27 2.83L511.03 5.58M506.27 5.58L511.03 2.83M515.76 1.45L515.76 6.95M513.38 2.83L518.15 5.58M513.38 5.58L518.15 2.83M522.88 1.45L522.88 6.95M520.50 2.83L525.26 5.58M520.50 5.58L525.26 2.83M529.99 1.45L529.99 6.95M527.61 2.83L532.37 5.58M527.61 5.58L532.37 2.83M537.11 1.45L537.11 6.95M534.73 2.83L539.49 5.58M534.73 5.58L539.49 2.83M544.22 1.45L544.22 6.95M541.84 2.83L546.60 5.58M541.84 5.58L546.60 2.83M551.34 1.45L551.34 6.95M548.95 2.83L553.72 5.58M548.95 5.58L553.72 2.83" stroke="#6a9955" stroke-width="1.05" fill="none"/></svg>
<svg class="ic" style="left:341.06px;top:367.82px;overflow:hidden" width="149.39" height="5" viewBox="0 0 149.39 5"><polyline points="0.00,3.15 0.50,3.02 1.00,2.66 1.50,2.17 2.00,1.70 2.50,1.36 3.00,1.25 3.50,1.41 4.00,1.78 4.50,2.28 5.00,2.75 5.50,3.07 6.00,3.14 6.50,2.96 7.00,2.57 7.50,2.07 8.00,1.61 8.50,1.32 9.00,1.26 9.50,1.47 10.00,1.88 10.50,2.38 11.00,2.83 11.50,3.10 12.00,3.13 12.50,2.90 13.00,2.47 13.50,1.97 14.00,1.54 14.50,1.28 15.00,1.28 15.50,1.54 16.00,1.97 16.50,2.47 17.00,2.90 17.50,3.13 18.00,3.10 18.50,2.83 19.00,2.38 19.50,1.88 20.00,1.47 20.50,1.26 21.00,1.32 21.50,1.61 22.00,2.07 22.50,2.57 23.00,2.96 23.50,3.14 24.00,3.07 24.50,2.75 25.00,2.28 25.50,1.78 26.00,1.41 26.50,1.25 27.00,1.36 27.50,1.70 28.00,2.17 28.50,2.66 29.00,3.02 29.50,3.15 30.00,3.02 30.50,2.66 31.00,2.17 31.50,1.70 32.00,1.36 32.50,1.25 33.00,1.41 33.50,1.78 34.00,2.28 34.50,2.75 35.00,3.07 35.50,3.14 36.00,2.96 36.50,2.57 37.00,2.07 37.50,1.61 38.00,1.32 38.50,1.26 39.00,1.47 39.50,1.88 40.00,2.38 40.50,2.83 41.00,3.10 41.50,3.13 42.00,2.90 42.50,2.47 43.00,1.97 43.50,1.54 44.00,1.28 44.50,1.28 45.00,1.54 45.50,1.97 46.00,2.47 46.50,2.90 47.00,3.13 47.50,3.10 48.00,2.83 48.50,2.38 49.00,1.88 49.50,1.47 50.00,1.26 50.50,1.32 51.00,1.61 51.50,2.07 52.00,2.57 52.50,2.96 53.00,3.14 53.50,3.07 54.00,2.75 54.50,2.28 55.00,1.78 55.50,1.41 56.00,1.25 56.50,1.36 57.00,1.70 57.50,2.17 58.00,2.66 58.50,3.02 59.00,3.15 59.50,3.02 60.00,2.66 60.50,2.17 61.00,1.70 61.50,1.36 62.00,1.25 62.50,1.41 63.00,1.78 63.50,2.28 64.00,2.75 64.50,3.07 65.00,3.14 65.50,2.96 66.00,2.57 66.50,2.07 67.00,1.61 67.50,1.32 68.00,1.26 68.50,1.47 69.00,1.88 69.50,2.38 70.00,2.83 70.50,3.10 71.00,3.13 71.50,2.90 72.00,2.47 72.50,1.97 73.00,1.54 73.50,1.28 74.00,1.28 74.50,1.54 75.00,1.97 75.50,2.47 76.00,2.90 76.50,3.13 77.00,3.10 77.50,2.83 78.00,2.38 78.50,1.88 79.00,1.47 79.50,1.26 80.00,1.32 80.50,1.61 81.00,2.07 81.50,2.57 82.00,2.96 82.50,3.14 83.00,3.07 83.50,2.75 84.00,2.28 84.50,1.78 85.00,1.41 85.50,1.25 86.00,1.36 86.50,1.70 87.00,2.17 87.50,2.66 88.00,3.02 88.50,3.15 89.00,3.02 89.50,2.66 90.00,2.17 90.50,1.70 91.00,1.36 91.50,1.25 92.00,1.41 92.50,1.78 93.00,2.28 93.50,2.75 94.00,3.07 94.50,3.14 95.00,2.96 95.50,2.57 96.00,2.07 96.50,1.61 97.00,1.32 97.50,1.26 98.00,1.47 98.50,1.88 99.00,2.38 99.50,2.83 100.00,3.10 100.50,3.13 101.00,2.90 101.50,2.47 102.00,1.97 102.50,1.54 103.00,1.28 103.50,1.28 104.00,1.54 104.50,1.97 105.00,2.47 105.50,2.90 106.00,3.13 106.50,3.10 107.00,2.83 107.50,2.38 108.00,1.88 108.50,1.47 109.00,1.26 109.50,1.32 110.00,1.61 110.50,2.07 111.00,2.57 111.50,2.96 112.00,3.14 112.50,3.07 113.00,2.75 113.50,2.28 114.00,1.78 114.50,1.41 115.00,1.25 115.50,1.36 116.00,1.70 116.50,2.17 117.00,2.66 117.50,3.02 118.00,3.15 118.50,3.02 119.00,2.66 119.50,2.17 120.00,1.70 120.50,1.36 121.00,1.25 121.50,1.41 122.00,1.78 122.50,2.28 123.00,2.75 123.50,3.07 124.00,3.14 124.50,2.96 125.00,2.57 125.50,2.07 126.00,1.61 126.50,1.32 127.00,1.26 127.50,1.47 128.00,1.88 128.50,2.38 129.00,2.83 129.50,3.10 130.00,3.13 130.50,2.90 131.00,2.47 131.50,1.97 132.00,1.54 132.50,1.28 133.00,1.28 133.50,1.54 134.00,1.97 134.50,2.47 135.00,2.90 135.50,3.13 136.00,3.10 136.50,2.83 137.00,2.38 137.50,1.88 138.00,1.47 138.50,1.26 139.00,1.32 139.50,1.61 140.00,2.07 140.50,2.57 141.00,2.96 141.50,3.14 142.00,3.07 142.50,2.75 143.00,2.28 143.50,1.78 144.00,1.41 144.50,1.25 145.00,1.36 145.50,1.70 146.00,2.17 146.50,2.66 147.00,3.02 147.50,3.15 148.00,3.02 148.50,2.66 149.00,2.17" fill="none" stroke="#cca700" stroke-width="1.2"/></svg>
<svg class="ic" style="left:341.06px;top:385.38px;overflow:hidden" width="120.94" height="5" viewBox="0 0 120.94 5"><polyline points="0.00,3.15 0.50,3.02 1.00,2.66 1.50,2.17 2.00,1.70 2.50,1.36 3.00,1.25 3.50,1.41 4.00,1.78 4.50,2.28 5.00,2.75 5.50,3.07 6.00,3.14 6.50,2.96 7.00,2.57 7.50,2.07 8.00,1.61 8.50,1.32 9.00,1.26 9.50,1.47 10.00,1.88 10.50,2.38 11.00,2.83 11.50,3.10 12.00,3.13 12.50,2.90 13.00,2.47 13.50,1.97 14.00,1.54 14.50,1.28 15.00,1.28 15.50,1.54 16.00,1.97 16.50,2.47 17.00,2.90 17.50,3.13 18.00,3.10 18.50,2.83 19.00,2.38 19.50,1.88 20.00,1.47 20.50,1.26 21.00,1.32 21.50,1.61 22.00,2.07 22.50,2.57 23.00,2.96 23.50,3.14 24.00,3.07 24.50,2.75 25.00,2.28 25.50,1.78 26.00,1.41 26.50,1.25 27.00,1.36 27.50,1.70 28.00,2.17 28.50,2.66 29.00,3.02 29.50,3.15 30.00,3.02 30.50,2.66 31.00,2.17 31.50,1.70 32.00,1.36 32.50,1.25 33.00,1.41 33.50,1.78 34.00,2.28 34.50,2.75 35.00,3.07 35.50,3.14 36.00,2.96 36.50,2.57 37.00,2.07 37.50,1.61 38.00,1.32 38.50,1.26 39.00,1.47 39.50,1.88 40.00,2.38 40.50,2.83 41.00,3.10 41.50,3.13 42.00,2.90 42.50,2.47 43.00,1.97 43.50,1.54 44.00,1.28 44.50,1.28 45.00,1.54 45.50,1.97 46.00,2.47 46.50,2.90 47.00,3.13 47.50,3.10 48.00,2.83 48.50,2.38 49.00,1.88 49.50,1.47 50.00,1.26 50.50,1.32 51.00,1.61 51.50,2.07 52.00,2.57 52.50,2.96 53.00,3.14 53.50,3.07 54.00,2.75 54.50,2.28 55.00,1.78 55.50,1.41 56.00,1.25 56.50,1.36 57.00,1.70 57.50,2.17 58.00,2.66 58.50,3.02 59.00,3.15 59.50,3.02 60.00,2.66 60.50,2.17 61.00,1.70 61.50,1.36 62.00,1.25 62.50,1.41 63.00,1.78 63.50,2.28 64.00,2.75 64.50,3.07 65.00,3.14 65.50,2.96 66.00,2.57 66.50,2.07 67.00,1.61 67.50,1.32 68.00,1.26 68.50,1.47 69.00,1.88 69.50,2.38 70.00,2.83 70.50,3.10 71.00,3.13 71.50,2.90 72.00,2.47 72.50,1.97 73.00,1.54 73.50,1.28 74.00,1.28 74.50,1.54 75.00,1.97 75.50,2.47 76.00,2.90 76.50,3.13 77.00,3.10 77.50,2.83 78.00,2.38 78.50,1.88 79.00,1.47 79.50,1.26 80.00,1.32 80.50,1.61 81.00,2.07 81.50,2.57 82.00,2.96 82.50,3.14 83.00,3.07 83.50,2.75 84.00,2.28 84.50,1.78 85.00,1.41 85.50,1.25 86.00,1.36 86.50,1.70 87.00,2.17 87.50,2.66 88.00,3.02 88.50,3.15 89.00,3.02 89.50,2.66 90.00,2.17 90.50,1.70 91.00,1.36 91.50,1.25 92.00,1.41 92.50,1.78 93.00,2.28 93.50,2.75 94.00,3.07 94.50,3.14 95.00,2.96 95.50,2.57 96.00,2.07 96.50,1.61 97.00,1.32 97.50,1.26 98.00,1.47 98.50,1.88 99.00,2.38 99.50,2.83 100.00,3.10 100.50,3.13 101.00,2.90 101.50,2.47 102.00,1.97 102.50,1.54 103.00,1.28 103.50,1.28 104.00,1.54 104.50,1.97 105.00,2.47 105.50,2.90 106.00,3.13 106.50,3.10 107.00,2.83 107.50,2.38 108.00,1.88 108.50,1.47 109.00,1.26 109.50,1.32 110.00,1.61 110.50,2.07 111.00,2.57 111.50,2.96 112.00,3.14 112.50,3.07 113.00,2.75 113.50,2.28 114.00,1.78 114.50,1.41 115.00,1.25 115.50,1.36 116.00,1.70 116.50,2.17 117.00,2.66 117.50,3.02 118.00,3.15 118.50,3.02 119.00,2.66 119.50,2.17 120.00,1.70 120.50,1.36" fill="none" stroke="#cca700" stroke-width="1.2"/></svg>
<svg class="ic" style="left:469.11px;top:385.38px;overflow:hidden" width="85.37" height="5" viewBox="0 0 85.37 5"><polyline points="0.00,3.15 0.50,3.02 1.00,2.66 1.50,2.17 2.00,1.70 2.50,1.36 3.00,1.25 3.50,1.41 4.00,1.78 4.50,2.28 5.00,2.75 5.50,3.07 6.00,3.14 6.50,2.96 7.00,2.57 7.50,2.07 8.00,1.61 8.50,1.32 9.00,1.26 9.50,1.47 10.00,1.88 10.50,2.38 11.00,2.83 11.50,3.10 12.00,3.13 12.50,2.90 13.00,2.47 13.50,1.97 14.00,1.54 14.50,1.28 15.00,1.28 15.50,1.54 16.00,1.97 16.50,2.47 17.00,2.90 17.50,3.13 18.00,3.10 18.50,2.83 19.00,2.38 19.50,1.88 20.00,1.47 20.50,1.26 21.00,1.32 21.50,1.61 22.00,2.07 22.50,2.57 23.00,2.96 23.50,3.14 24.00,3.07 24.50,2.75 25.00,2.28 25.50,1.78 26.00,1.41 26.50,1.25 27.00,1.36 27.50,1.70 28.00,2.17 28.50,2.66 29.00,3.02 29.50,3.15 30.00,3.02 30.50,2.66 31.00,2.17 31.50,1.70 32.00,1.36 32.50,1.25 33.00,1.41 33.50,1.78 34.00,2.28 34.50,2.75 35.00,3.07 35.50,3.14 36.00,2.96 36.50,2.57 37.00,2.07 37.50,1.61 38.00,1.32 38.50,1.26 39.00,1.47 39.50,1.88 40.00,2.38 40.50,2.83 41.00,3.10 41.50,3.13 42.00,2.90 42.50,2.47 43.00,1.97 43.50,1.54 44.00,1.28 44.50,1.28 45.00,1.54 45.50,1.97 46.00,2.47 46.50,2.90 47.00,3.13 47.50,3.10 48.00,2.83 48.50,2.38 49.00,1.88 49.50,1.47 50.00,1.26 50.50,1.32 51.00,1.61 51.50,2.07 52.00,2.57 52.50,2.96 53.00,3.14 53.50,3.07 54.00,2.75 54.50,2.28 55.00,1.78 55.50,1.41 56.00,1.25 56.50,1.36 57.00,1.70 57.50,2.17 58.00,2.66 58.50,3.02 59.00,3.15 59.50,3.02 60.00,2.66 60.50,2.17 61.00,1.70 61.50,1.36 62.00,1.25 62.50,1.41 63.00,1.78 63.50,2.28 64.00,2.75 64.50,3.07 65.00,3.14 65.50,2.96 66.00,2.57 66.50,2.07 67.00,1.61 67.50,1.32 68.00,1.26 68.50,1.47 69.00,1.88 69.50,2.38 70.00,2.83 70.50,3.10 71.00,3.13 71.50,2.90 72.00,2.47 72.50,1.97 73.00,1.54 73.50,1.28 74.00,1.28 74.50,1.54 75.00,1.97 75.50,2.47 76.00,2.90 76.50,3.13 77.00,3.10 77.50,2.83 78.00,2.38 78.50,1.88 79.00,1.47 79.50,1.26 80.00,1.32 80.50,1.61 81.00,2.07 81.50,2.57 82.00,2.96 82.50,3.14 83.00,3.07 83.50,2.75 84.00,2.28 84.50,1.78 85.00,1.41" fill="none" stroke="#f14c4c" stroke-width="1.2"/></svg>
<svg class="ic" style="left:341.06px;top:420.50px;overflow:hidden" width="42.68" height="5" viewBox="0 0 42.68 5"><polyline points="0.00,3.15 0.50,3.02 1.00,2.66 1.50,2.17 2.00,1.70 2.50,1.36 3.00,1.25 3.50,1.41 4.00,1.78 4.50,2.28 5.00,2.75 5.50,3.07 6.00,3.14 6.50,2.96 7.00,2.57 7.50,2.07 8.00,1.61 8.50,1.32 9.00,1.26 9.50,1.47 10.00,1.88 10.50,2.38 11.00,2.83 11.50,3.10 12.00,3.13 12.50,2.90 13.00,2.47 13.50,1.97 14.00,1.54 14.50,1.28 15.00,1.28 15.50,1.54 16.00,1.97 16.50,2.47 17.00,2.90 17.50,3.13 18.00,3.10 18.50,2.83 19.00,2.38 19.50,1.88 20.00,1.47 20.50,1.26 21.00,1.32 21.50,1.61 22.00,2.07 22.50,2.57 23.00,2.96 23.50,3.14 24.00,3.07 24.50,2.75 25.00,2.28 25.50,1.78 26.00,1.41 26.50,1.25 27.00,1.36 27.50,1.70 28.00,2.17 28.50,2.66 29.00,3.02 29.50,3.15 30.00,3.02 30.50,2.66 31.00,2.17 31.50,1.70 32.00,1.36 32.50,1.25 33.00,1.41 33.50,1.78 34.00,2.28 34.50,2.75 35.00,3.07 35.50,3.14 36.00,2.96 36.50,2.57 37.00,2.07 37.50,1.61 38.00,1.32 38.50,1.26 39.00,1.47 39.50,1.88 40.00,2.38 40.50,2.83 41.00,3.10 41.50,3.13 42.00,2.90 42.50,2.47" fill="none" stroke="#cca700" stroke-width="1.2"/></svg>
<svg class="ic" style="left:405.08px;top:490.74px;overflow:hidden" width="49.80" height="5" viewBox="0 0 49.80 5"><polyline points="0.00,3.15 0.50,3.02 1.00,2.66 1.50,2.17 2.00,1.70 2.50,1.36 3.00,1.25 3.50,1.41 4.00,1.78 4.50,2.28 5.00,2.75 5.50,3.07 6.00,3.14 6.50,2.96 7.00,2.57 7.50,2.07 8.00,1.61 8.50,1.32 9.00,1.26 9.50,1.47 10.00,1.88 10.50,2.38 11.00,2.83 11.50,3.10 12.00,3.13 12.50,2.90 13.00,2.47 13.50,1.97 14.00,1.54 14.50,1.28 15.00,1.28 15.50,1.54 16.00,1.97 16.50,2.47 17.00,2.90 17.50,3.13 18.00,3.10 18.50,2.83 19.00,2.38 19.50,1.88 20.00,1.47 20.50,1.26 21.00,1.32 21.50,1.61 22.00,2.07 22.50,2.57 23.00,2.96 23.50,3.14 24.00,3.07 24.50,2.75 25.00,2.28 25.50,1.78 26.00,1.41 26.50,1.25 27.00,1.36 27.50,1.70 28.00,2.17 28.50,2.66 29.00,3.02 29.50,3.15 30.00,3.02 30.50,2.66 31.00,2.17 31.50,1.70 32.00,1.36 32.50,1.25 33.00,1.41 33.50,1.78 34.00,2.28 34.50,2.75 35.00,3.07 35.50,3.14 36.00,2.96 36.50,2.57 37.00,2.07 37.50,1.61 38.00,1.32 38.50,1.26 39.00,1.47 39.50,1.88 40.00,2.38 40.50,2.83 41.00,3.10 41.50,3.13 42.00,2.90 42.50,2.47 43.00,1.97 43.50,1.54 44.00,1.28 44.50,1.28 45.00,1.54 45.50,1.97 46.00,2.47 46.50,2.90 47.00,3.13 47.50,3.10 48.00,2.83 48.50,2.38 49.00,1.88 49.50,1.47" fill="none" stroke="#cca700" stroke-width="1.2"/></svg>
<svg class="ic" style="left:369.51px;top:508.30px;overflow:hidden" width="49.80" height="5" viewBox="0 0 49.80 5"><polyline points="0.00,3.15 0.50,3.02 1.00,2.66 1.50,2.17 2.00,1.70 2.50,1.36 3.00,1.25 3.50,1.41 4.00,1.78 4.50,2.28 5.00,2.75 5.50,3.07 6.00,3.14 6.50,2.96 7.00,2.57 7.50,2.07 8.00,1.61 8.50,1.32 9.00,1.26 9.50,1.47 10.00,1.88 10.50,2.38 11.00,2.83 11.50,3.10 12.00,3.13 12.50,2.90 13.00,2.47 13.50,1.97 14.00,1.54 14.50,1.28 15.00,1.28 15.50,1.54 16.00,1.97 16.50,2.47 17.00,2.90 17.50,3.13 18.00,3.10 18.50,2.83 19.00,2.38 19.50,1.88 20.00,1.47 20.50,1.26 21.00,1.32 21.50,1.61 22.00,2.07 22.50,2.57 23.00,2.96 23.50,3.14 24.00,3.07 24.50,2.75 25.00,2.28 25.50,1.78 26.00,1.41 26.50,1.25 27.00,1.36 27.50,1.70 28.00,2.17 28.50,2.66 29.00,3.02 29.50,3.15 30.00,3.02 30.50,2.66 31.00,2.17 31.50,1.70 32.00,1.36 32.50,1.25 33.00,1.41 33.50,1.78 34.00,2.28 34.50,2.75 35.00,3.07 35.50,3.14 36.00,2.96 36.50,2.57 37.00,2.07 37.50,1.61 38.00,1.32 38.50,1.26 39.00,1.47 39.50,1.88 40.00,2.38 40.50,2.83 41.00,3.10 41.50,3.13 42.00,2.90 42.50,2.47 43.00,1.97 43.50,1.54 44.00,1.28 44.50,1.28 45.00,1.54 45.50,1.97 46.00,2.47 46.50,2.90 47.00,3.13 47.50,3.10 48.00,2.83 48.50,2.38 49.00,1.88 49.50,1.47" fill="none" stroke="#cca700" stroke-width="1.2"/></svg>
<svg class="ic" style="left:541px;top:398px" width="40" height="40" viewBox="0 0 40 40"><circle cx="20" cy="20" r="18" fill="none" stroke="#ffff00" stroke-width="2.2"/></svg>
<div class="abs" style="left:554.6px;top:406px;-webkit-text-stroke:0.5px #ffff00;font:bold 21px/24px 'Liberation Sans',sans-serif;color:#ffff00">5</div>
<svg class="ic" style="left:0;top:0" width="100" height="130" viewBox="0 0 100 130"><polygon points="60.50,88.40 63.10,91.30 61.35,91.30 61.35,95.45 64.10,95.45 64.10,93.80 68.80,96.30 64.10,98.80 64.10,97.15 61.35,97.15 61.35,101.30 63.10,101.30 60.50,104.20 57.90,101.30 59.65,101.30 59.65,97.15 56.90,97.15 56.90,98.80 52.20,96.30 56.90,93.80 56.90,95.45 59.65,95.45 59.65,91.30 57.90,91.30" fill="#000" stroke="#fff" stroke-width="2.5" stroke-linejoin="miter" stroke-miterlimit="3" paint-order="stroke"/><polygon points="61.30,98.20 61.30,109.40 63.90,106.90 67.00,113.80 69.10,112.90 66.20,106.20 69.60,106.20" fill="#fff" stroke="#000" stroke-width="1"/></svg>
</body></html>
